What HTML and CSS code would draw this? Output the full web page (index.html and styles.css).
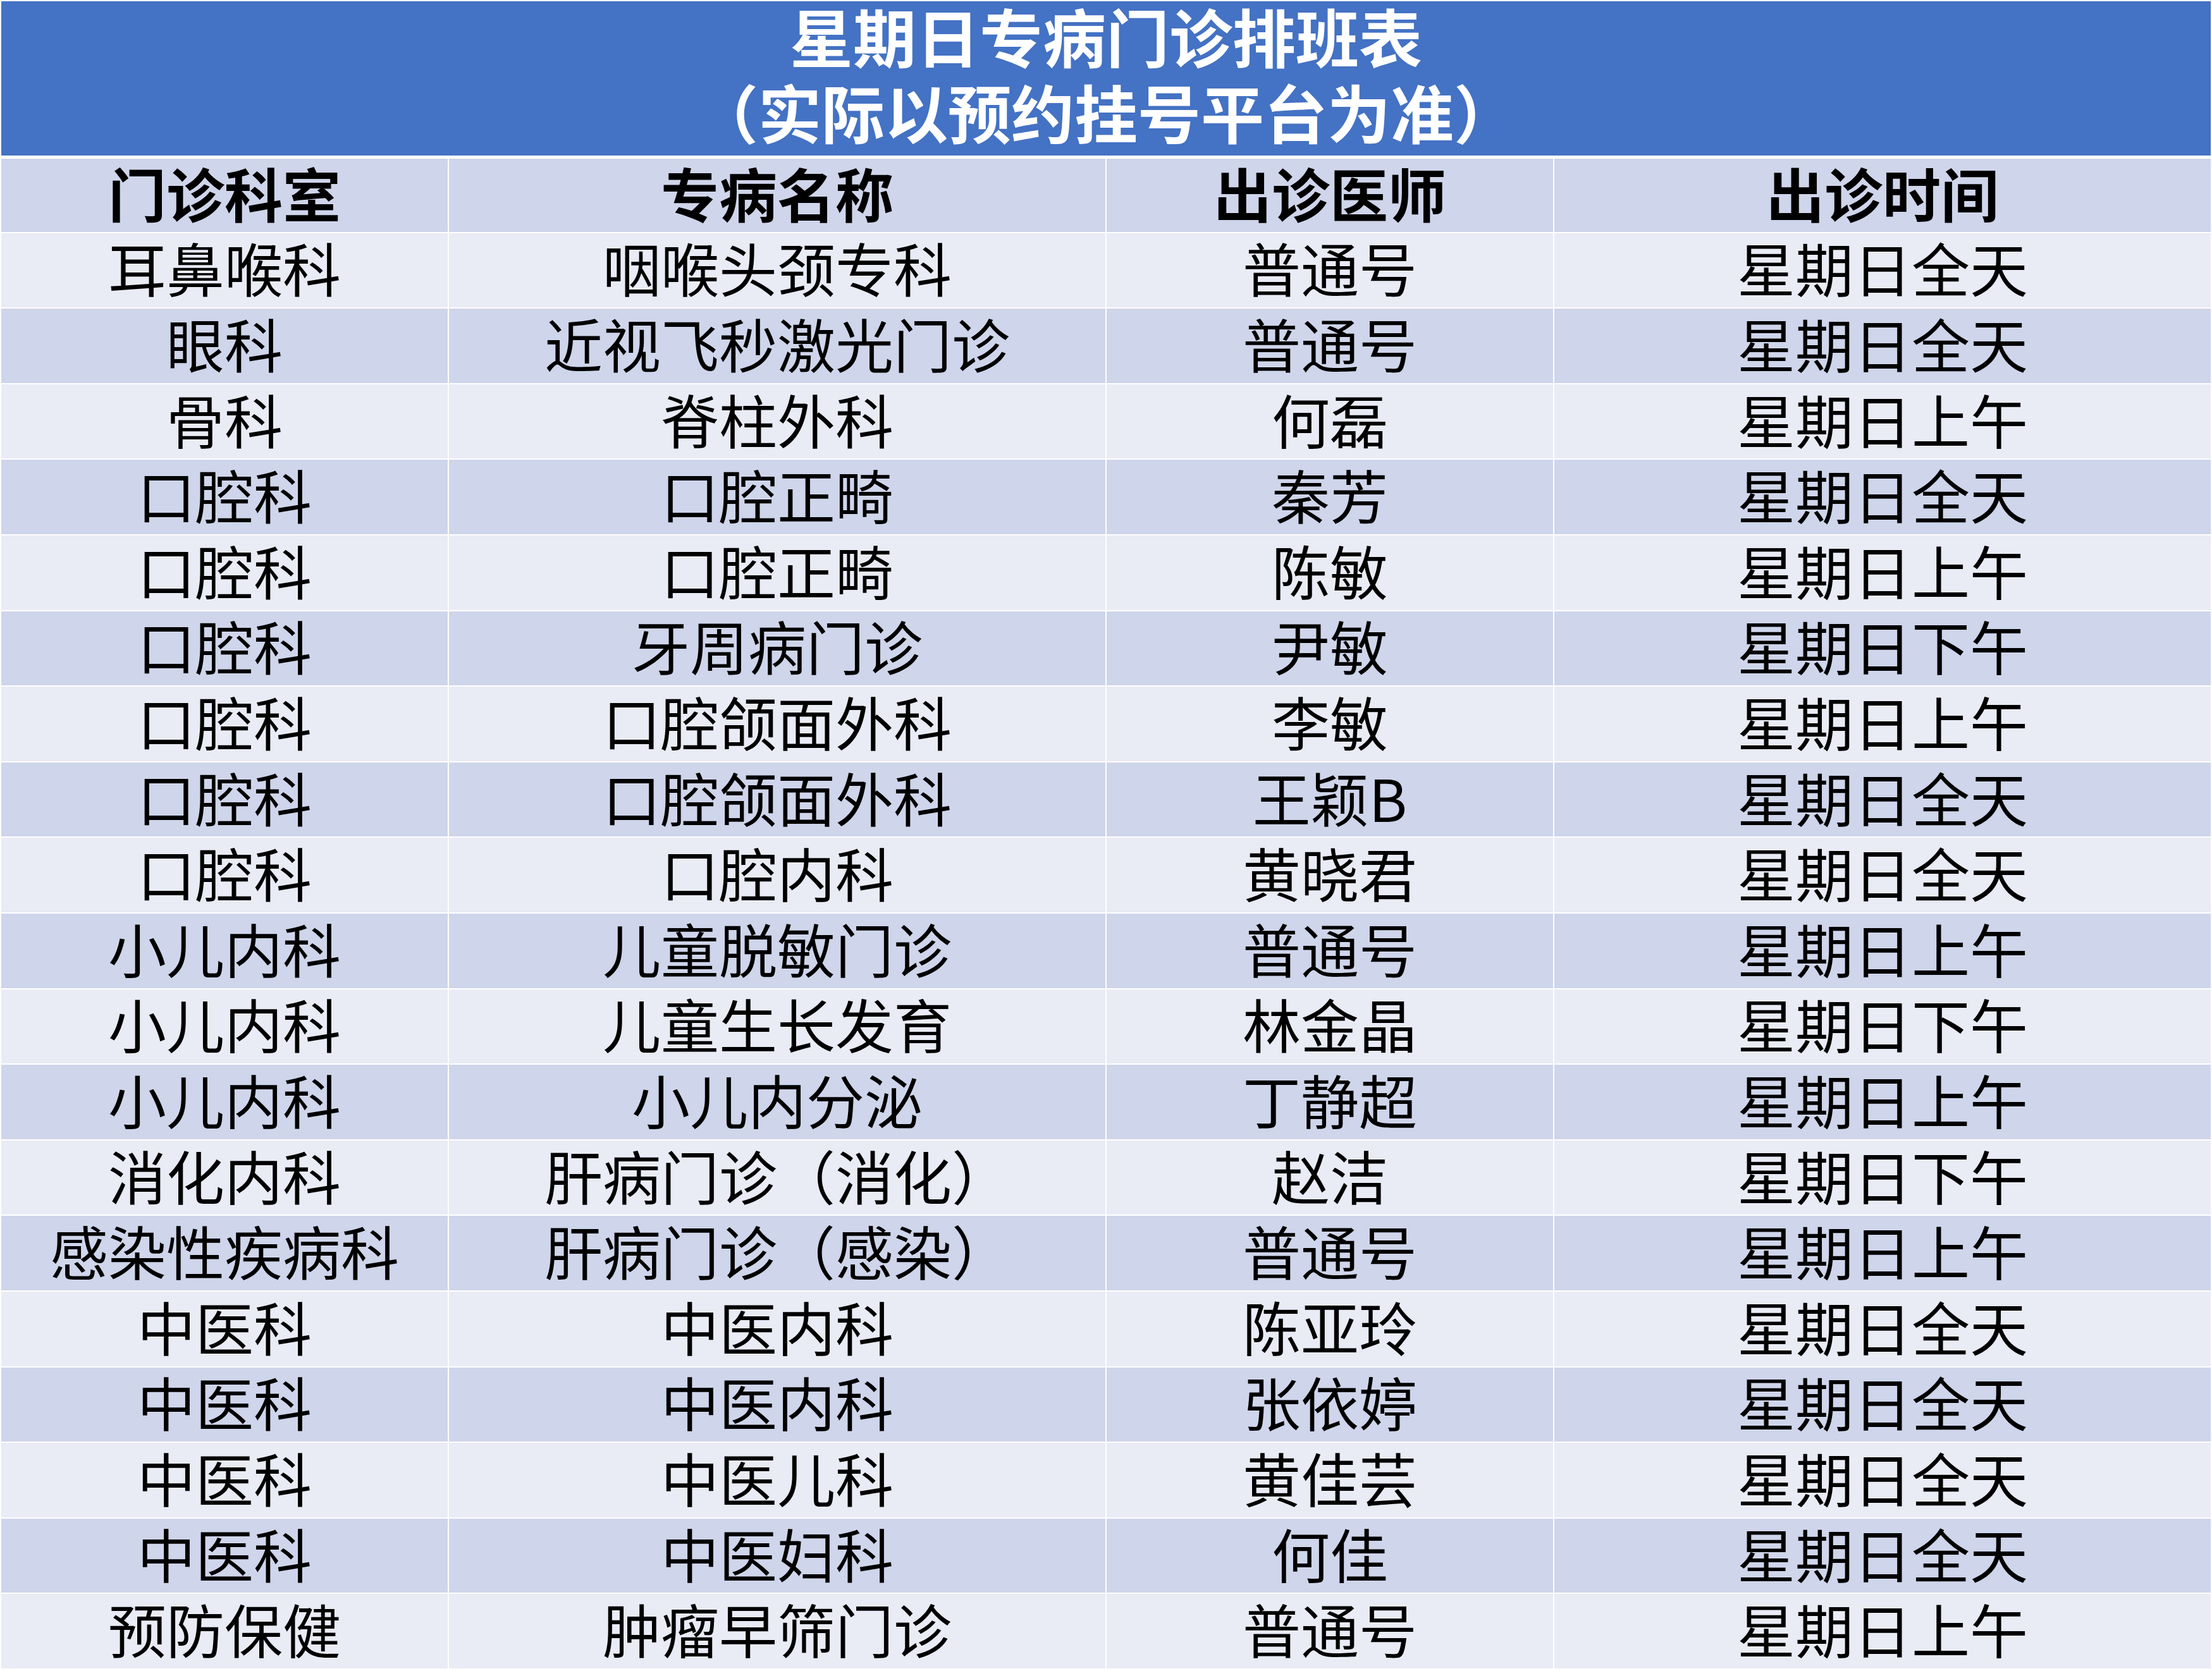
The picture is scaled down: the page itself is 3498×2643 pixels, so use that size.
FILE: index.html
```html
<!DOCTYPE html>
<html lang="zh-CN">
<head>
<meta charset="utf-8">
<title>星期日专病门诊排班表</title>
<link rel="stylesheet" href="styles.css">
</head>
<body>
<div class="title">
  <div class="title-line">星期日专病门诊排班表</div>
  <div class="title-line">（实际以预约挂号平台为准）</div>
</div>
<table class="schedule">
  <colgroup>
    <col class="col-narrow"><col class="col-wide"><col class="col-narrow"><col class="col-wide">
  </colgroup>
  <thead>
    <tr class="head"><th>门诊科室</th><th>专病名称</th><th>出诊医师</th><th>出诊时间</th></tr>
  </thead>
  <tbody>
    <tr class="light"><td>耳鼻喉科</td><td>咽喉头颈专科</td><td>普通号</td><td>星期日全天</td></tr>
    <tr class="dark"><td>眼科</td><td>近视飞秒激光门诊</td><td>普通号</td><td>星期日全天</td></tr>
    <tr class="light"><td>骨科</td><td>脊柱外科</td><td>何磊</td><td>星期日上午</td></tr>
    <tr class="dark"><td>口腔科</td><td>口腔正畸</td><td>秦芳</td><td>星期日全天</td></tr>
    <tr class="light"><td>口腔科</td><td>口腔正畸</td><td>陈敏</td><td>星期日上午</td></tr>
    <tr class="dark"><td>口腔科</td><td>牙周病门诊</td><td>尹敏</td><td>星期日下午</td></tr>
    <tr class="light"><td>口腔科</td><td>口腔颌面外科</td><td>李敏</td><td>星期日上午</td></tr>
    <tr class="dark"><td>口腔科</td><td>口腔颌面外科</td><td>王颖B</td><td>星期日全天</td></tr>
    <tr class="light"><td>口腔科</td><td>口腔内科</td><td>黄晓君</td><td>星期日全天</td></tr>
    <tr class="dark"><td>小儿内科</td><td>儿童脱敏门诊</td><td>普通号</td><td>星期日上午</td></tr>
    <tr class="light"><td>小儿内科</td><td>儿童生长发育</td><td>林金晶</td><td>星期日下午</td></tr>
    <tr class="dark"><td>小儿内科</td><td>小儿内分泌</td><td>丁静超</td><td>星期日上午</td></tr>
    <tr class="light"><td>消化内科</td><td>肝病门诊（消化）</td><td>赵洁</td><td>星期日下午</td></tr>
    <tr class="dark"><td>感染性疾病科</td><td>肝病门诊（感染）</td><td>普通号</td><td>星期日上午</td></tr>
    <tr class="light"><td>中医科</td><td>中医内科</td><td>陈亚玲</td><td>星期日全天</td></tr>
    <tr class="dark"><td>中医科</td><td>中医内科</td><td>张依婷</td><td>星期日全天</td></tr>
    <tr class="light"><td>中医科</td><td>中医儿科</td><td>黄佳芸</td><td>星期日全天</td></tr>
    <tr class="dark"><td>中医科</td><td>中医妇科</td><td>何佳</td><td>星期日全天</td></tr>
    <tr class="light"><td>预防保健</td><td>肿瘤早筛门诊</td><td>普通号</td><td>星期日上午</td></tr>
  </tbody>
</table>
</body>
</html>
```
FILE: styles.css
```css
html, body {
  margin: 0;
  padding: 0;
  background: #ffffff;
}
body {
  width: 3498px;
  overflow: hidden;
  font-family: "Noto Sans CJK SC", "Noto Sans", sans-serif;
  color: #000000;
}
.title {
  margin: 2px 2px 3px 2px;
  height: 244px;
  background: #4472C4;
  color: #ffffff;
  font-weight: bold;
  font-size: 100px;
  line-height: 120px;
  text-align: center;
  display: flex;
  flex-direction: column;
  justify-content: center;
  padding-bottom: 16px;
  box-sizing: border-box;
}
.title-line {
  white-space: nowrap;
}
.schedule {
  width: 3498px;
  table-layout: fixed;
  border-collapse: separate;
  border-spacing: 2px;
}
.col-narrow { width: 706px; }
.col-wide { width: 1038px; }
.schedule th,
.schedule td {
  box-sizing: border-box;
  padding: 0 0 10px 0;
  height: 117.6px;
  text-align: center;
  vertical-align: middle;
  font-size: 92px;
  line-height: 1;
  white-space: nowrap;
}
.schedule th {
  font-weight: bold;
  height: 115.7px;
}
.head th { background: #CFD5EA; }
.light td { background: #E9EBF5; }
.dark td { background: #CFD5EA; }
```
